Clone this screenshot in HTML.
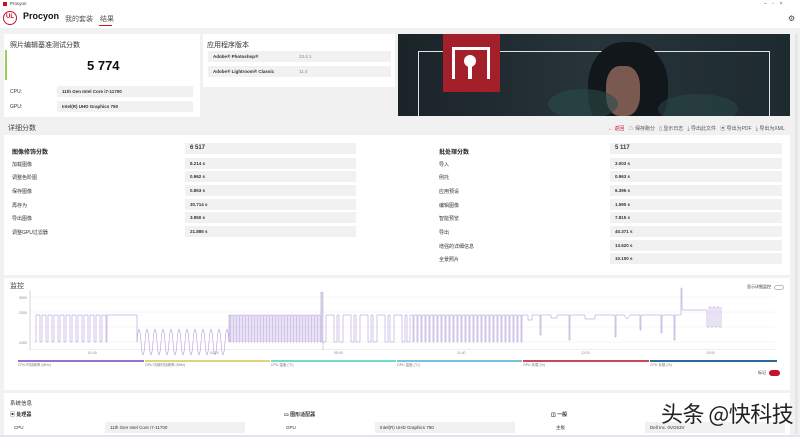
<!DOCTYPE html>
<html><head><meta charset="utf-8"><style>
*{margin:0;padding:0;box-sizing:border-box}
body{width:800px;height:437px;overflow:hidden;background:#f1f1f1;font-family:"Liberation Sans","Noto Sans CJK SC",sans-serif;color:#222;position:relative}
.a{position:absolute}
.t{font-size:5px;color:#333;white-space:nowrap}
.box{position:absolute;background:#f1f1f1;height:11px;font-size:4.5px;line-height:11px;padding-left:5px;color:#333;font-weight:bold}
.card{position:absolute;background:#fff}
.h{font-size:7px;color:#333;white-space:nowrap}
</style></head><body>
<div class="a" style="left:0;top:0;width:800px;height:28px;background:#fff"></div>
<div class="a" style="left:3px;top:2px;width:4px;height:4px;background:#c8102e"></div>
<div class="a t" style="left:10px;top:1px;font-size:4.5px">Procyon</div>
<div class="a t" style="left:764px;top:1px;font-size:5px;color:#555">–&nbsp;&nbsp;&nbsp;&nbsp;▫&nbsp;&nbsp;&nbsp;&nbsp;×</div>
<div class="a" style="left:3px;top:11px;width:14px;height:14px;border-radius:50%;border:1.5px solid #c8102e;color:#c8102e;font-size:6px;font-weight:bold;line-height:11px;text-align:center">UL</div>
<div class="a" style="left:23px;top:11px;font-size:9px;font-weight:bold;color:#111">Procyon</div>
<div class="a h" style="left:65px;top:14px;color:#555">我的套装</div>
<div class="a h" style="left:100px;top:14px;color:#555">结果</div>
<div class="a" style="left:99px;top:25px;width:13px;height:1px;background:#c8102e"></div>
<div class="a" style="left:788px;top:14px;font-size:8px;color:#444">⚙</div>

<div class="card" style="left:4px;top:34px;width:196px;height:83px"></div>
<div class="a h" style="left:10px;top:40px">照片编辑基准测试分数</div>
<div class="a" style="left:5px;top:50px;width:2px;height:30px;background:#9acd5a"></div>
<div class="a" style="left:87px;top:58px;font-size:13px;font-weight:bold;color:#111">5 774</div>
<div class="a t" style="left:10px;top:89px">CPU:</div>
<div class="box" style="left:57px;top:86px;width:136px">11th Gen Intel Core i7-11700</div>
<div class="a t" style="left:10px;top:104px">GPU:</div>
<div class="box" style="left:57px;top:101px;width:136px">Intel(R) UHD Graphics 750</div>

<div class="card" style="left:203px;top:34px;width:192px;height:53px"></div>
<div class="a h" style="left:207px;top:40px">应用程序版本</div>
<div class="box" style="left:208px;top:51px;width:183px">Adobe® Photoshop®<span style="position:absolute;left:91px;font-weight:normal;color:#888">23.4.1</span></div>
<div class="box" style="left:208px;top:66px;width:183px">Adobe® Lightroom® Classic<span style="position:absolute;left:91px;font-weight:normal;color:#888">11.4</span></div>

<div class="a" style="left:398px;top:34px;width:392px;height:82px;background:linear-gradient(90deg,#1a2328,#27343a 50%,#1d2a30);overflow:hidden">
<div class="a" style="left:20px;top:17px;width:352px;height:80px;border:1.2px solid #dfe4e6"></div>
<div class="a" style="left:190px;top:8px;width:80px;height:95px;border-radius:45%;background:#12171c"></div>
<div class="a" style="left:208px;top:32px;width:34px;height:50px;border-radius:40%;background:#7a5a50"></div>
<div class="a" style="left:150px;top:55px;width:70px;height:30px;border-radius:50%;background:#2a4a48;opacity:.6"></div>
<div class="a" style="left:260px;top:60px;width:80px;height:30px;border-radius:50%;background:#2a4a48;opacity:.5"></div>
<div class="a" style="left:45px;top:0;width:57px;height:58px;background:#a31f2a"></div>
<div class="a" style="left:54px;top:13px;width:38px;height:32px;border:3px solid #fff;border-bottom:none"></div>
<div class="a" style="left:66px;top:21px;width:12px;height:12px;border-radius:50%;background:#fff"></div>
<div class="a" style="left:70px;top:30px;width:4px;height:15px;background:#fff"></div>
</div>
<div class="a" style="left:795px;top:34px;width:3px;height:400px;background:#e6e6e6"></div>

<div class="a h" style="left:8px;top:123px;color:#444">详细分数</div>
<div class="a t" style="left:608px;top:125px;color:#555"><span style="color:#c8102e">← 返回</span>&nbsp;&nbsp;&nbsp;☁ 保存跑分&nbsp;&nbsp;&nbsp;▯ 显示日志&nbsp;&nbsp;&nbsp;⤓ 导出此文件&nbsp;&nbsp;&nbsp;▣ 导出为PDF&nbsp;&nbsp;&nbsp;⤓ 导出为XML</div>
<div class="card" style="left:4px;top:135px;width:786px;height:140px"></div>

<div class="a" style="left:12px;top:147px;font-size:6px;font-weight:bold">图像修饰分数</div>
<div class="box" style="left:185px;top:143px;width:171px;font-size:6px">6 517</div>
<div class="a t" style="left:12px;top:161px">加载图像</div><div class="box" style="left:185px;top:158px;width:171px">8.214 s</div>
<div class="a t" style="left:12px;top:174px">调整色阶图</div><div class="box" style="left:185px;top:171px;width:171px">0.962 s</div>
<div class="a t" style="left:12px;top:188px">保存图像</div><div class="box" style="left:185px;top:185px;width:171px">0.853 s</div>
<div class="a t" style="left:12px;top:202px">再存为</div><div class="box" style="left:185px;top:199px;width:171px">30.714 s</div>
<div class="a t" style="left:12px;top:215px">导出图像</div><div class="box" style="left:185px;top:212px;width:171px">3.950 s</div>
<div class="a t" style="left:12px;top:229px">调整GPU过滤器</div><div class="box" style="left:185px;top:226px;width:171px">21.885 s</div>

<div class="a" style="left:439px;top:147px;font-size:6px;font-weight:bold">批处理分数</div>
<div class="box" style="left:610px;top:143px;width:172px;font-size:6px">5 117</div>
<div class="a t" style="left:439px;top:161px">导入</div><div class="box" style="left:610px;top:158px;width:172px">3.003 s</div>
<div class="a t" style="left:439px;top:174px">例托</div><div class="box" style="left:610px;top:171px;width:172px">0.963 s</div>
<div class="a t" style="left:439px;top:188px">应用预设</div><div class="box" style="left:610px;top:185px;width:172px">6.395 s</div>
<div class="a t" style="left:439px;top:202px">编辑图像</div><div class="box" style="left:610px;top:199px;width:172px">1.590 s</div>
<div class="a t" style="left:439px;top:215px">智能预览</div><div class="box" style="left:610px;top:212px;width:172px">7.815 s</div>
<div class="a t" style="left:439px;top:229px">导出</div><div class="box" style="left:610px;top:226px;width:172px">40.371 s</div>
<div class="a t" style="left:439px;top:243px">增强的详细信息</div><div class="box" style="left:610px;top:240px;width:172px">13.620 s</div>
<div class="a t" style="left:439px;top:256px">全景照片</div><div class="box" style="left:610px;top:253px;width:172px">10.100 s</div>

<div class="card" style="left:4px;top:278px;width:786px;height:112px"></div>
<div class="a h" style="left:10px;top:281px;color:#444">监控</div>
<div class="a t" style="left:747px;top:284px;font-size:4px">显示详细监控</div>
<div class="a" style="left:774px;top:285px;width:10px;height:5px;border-radius:3px;border:0.6px solid #bbb"></div>
<svg class="a" style="left:0;top:0" width="800" height="437">
<g stroke="#eee" stroke-width="0.5"><line x1="30" y1="297" x2="775" y2="297"/><line x1="30" y1="312" x2="775" y2="312"/><line x1="30" y1="327" x2="775" y2="327"/><line x1="30" y1="342" x2="775" y2="342"/></g>
<line x1="30" y1="290" x2="30" y2="350" stroke="#bbb" stroke-width="0.6"/>
<line x1="30" y1="349.5" x2="775" y2="349.5" stroke="#ddd" stroke-width="0.5"/>
<line x1="323" y1="292" x2="323" y2="350" stroke="#bbb" stroke-width="0.6"/>
<path fill="none" stroke="#a58bd6" stroke-width="0.5" d="M35 342h1v-27h4v27h1h1v-27h4v27h1h1v-27h4v27h1h1v-27h4v27h1h1v-27h4v27h1h1v-27h4v27h1h1v-27h4v27h1h1v-27h4v27h1h1v-27h4v27h1h1v-27h4v27h1h1v-27h4v27h1h1v-27h4v27h1v-27h30v27q2 -26 4 0t4 0t4 0t4 0t4 0t4 0t4 0t4 0t4 0t4 0t4 0t4 0t4 0t4 0t4 0t4 0t4 0t4 0t4 0t4 0t4 0t4 0t4 0v-27h1v27h1v-27h2v27h1v-27h2v27h1v-27h2v27h1v-27h2v27h1v-27h2v27h1v-27h2v27h1v-27h2v27h1v-27h2v27h1v-27h2v27h1v-27h2v27h1v-27h2v27h1v-27h2v27h1v-27h2v27h1v-27h2v27h1v-27h2v27h1v-27h2v27h1v-27h2v27h1v-27h2v27h1v-27h2v27h1v-27h2v27h1v-27h2v27h1v-27h2v27h1v-27h2v27h1v-27h2v27h1v-27h2v27h1v-27h2v27h1v-27h2v27h1v-27h2v27h1v-27h2v27h1v-27h2v27h1v-50h1v50h4v-27h8v27h3v-27h2v27h4v-27h8v27h3v-27h2v27h4v-27h8v27h3v-27h2v27h4v-27h8v27h3v-27h2v27h4v-27h8v27h3v-27h2v27h3v-27h3v27h1v-27h3v27h1v-27h3v27h1v-27h3v27h1v-27h3v27h1v-27h3v27h1v-27h3v27h1v-27h3v27h1v-27h3v27h1v-27h3v27h1v-27h3v27h1v-27h3v27h1v-27h3v27h1v-27h3v27h1v-27h3v27h1v-27h3v27h1v-27h3v27h1v-27h3v27h1v-27h3v27h1v-27h3v27h1v-27h3v27h1v-27h3v27h1v-27h3v27h1v-27h3v27h1v-27h3v27h1v-27h3v27h1v-27h3v27h1v-27h3v27h1v-27h6v5h4v-5h8v20h1v-20h10v3h6v-3h12v25h1v-25h15v4h10v-4h20v22h1v-22h8l3 4l3-4h10v15h1v-15h20v18h1v-18h12v25h1v-25h6v-27h1v22h25v17h2v-20h2v20h2v-20h2v20h2v-20h2v20h2v-20"/>
<g font-size="3.5" fill="#888" font-family="Liberation Sans"><text x="88" y="354">01:40</text><text x="210" y="354">03:20</text><text x="334" y="354">05:00</text><text x="457" y="354">11:40</text><text x="581" y="354">13:20</text><text x="706" y="354">15:00</text>
<text x="19" y="299">3000</text><text x="19" y="314">2000</text><text x="19" y="344">1000</text></g>
<rect x="18" y="360" width="126" height="2" fill="#9b6fd0"/><rect x="145" y="360" width="125" height="2" fill="#e3d27a"/><rect x="271" y="360" width="125" height="2" fill="#6fdcc4"/><rect x="397" y="360" width="125" height="2" fill="#7bc0e3"/><rect x="523" y="360" width="126" height="2" fill="#c84a5a"/><rect x="650" y="360" width="127" height="2" fill="#2f6a9a"/>
<g font-size="3.5" fill="#777" font-family="Liberation Sans,Noto Sans CJK SC"><text x="18" y="366">CPU 时钟频率 (MHz)</text><text x="145" y="366">GPU 内核时钟频率 (MHz)</text><text x="271" y="366">CPU 温度 (°C)</text><text x="397" y="366">GPU 温度 (°C)</text><text x="523" y="366">GPU 负载 (%)</text><text x="650" y="366">CPU 负载 (%)</text></g>
</svg>
<div class="a t" style="left:758px;top:370px;font-size:4px">标记</div>
<div class="a" style="left:769px;top:370px;width:11px;height:6px;border-radius:3px;background:#c8102e"></div>

<div class="card" style="left:4px;top:393px;width:786px;height:44px"></div>
<div class="a t" style="left:10px;top:399px;font-size:5.5px">系统信息</div>
<div class="a t" style="left:10px;top:411px;font-weight:bold">▣ 处理器</div>
<div class="a t" style="left:284px;top:411px;font-weight:bold">▭ 图形适配器</div>
<div class="a t" style="left:551px;top:411px;font-weight:bold">◫ 一般</div>
<div class="a t" style="left:14px;top:425px;font-size:4.5px">CPU</div>
<div class="box" style="left:105px;top:422px;width:140px;font-weight:normal">11th Gen Intel Core i7-11700</div>
<div class="a t" style="left:286px;top:425px;font-size:4.5px">GPU</div>
<div class="box" style="left:375px;top:422px;width:140px;font-weight:normal">Intel(R) UHD Graphics 750</div>
<div class="a t" style="left:556px;top:425px;font-size:4.5px">主板</div>
<div class="box" style="left:645px;top:422px;width:140px;font-weight:normal">Dell Inc. 0VG53V</div>
<div class="a" style="left:661px;top:400px;font-size:22px;color:#222;font-family:'Noto Sans CJK SC',sans-serif;white-space:nowrap;letter-spacing:-0.5px;line-height:26px">头条 @快科技</div>
<div class="a" style="left:0;top:435px;width:800px;height:2px;background:#dfe6f0"></div>
</body></html>
